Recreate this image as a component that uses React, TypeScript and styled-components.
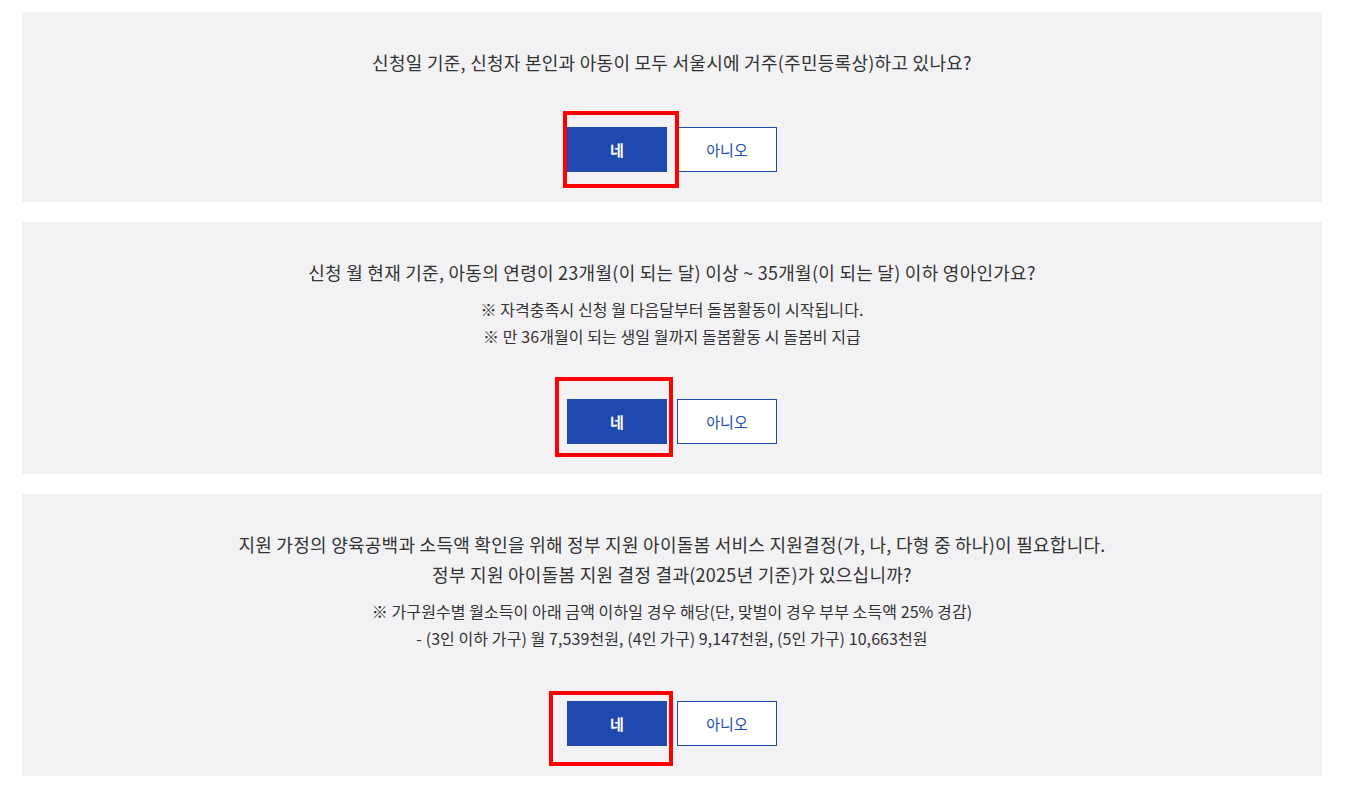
import React from "react";
import styled, { createGlobalStyle } from "styled-components";

const GlobalStyle = createGlobalStyle`
  body {
    margin: 0;
    background: #ffffff;
    font-family: "Noto Sans CJK KR", "Noto Sans", sans-serif;
    color: #333333;
  }
`;

const Page = styled.div`
  display: flex;
  flex-direction: column;
  gap: 20px;
  width: 1300px;
  padding: 12px 0 0 22px;
`;

const Card = styled.section`
  background: #f2f2f4;
  padding: 35px 0 30px;
  display: flex;
  flex-direction: column;
  align-items: center;
  text-align: center;
`;

const Question = styled.p`
  margin: 0;
  font-size: 18px;
  line-height: 30px;
  letter-spacing: 0.27px;
  color: #333333;
`;

const Notes = styled.div`
  margin-top: 9px;
  font-size: 16px;
  line-height: 26.5px;
  letter-spacing: 0.08px;
  color: #333333;
`;

const Buttons = styled.div`
  margin-top: 50px;
  display: flex;
  gap: 10px;
`;

const ButtonWrap = styled.div`
  position: relative;
`;

const Button = styled.button<{ $primary?: boolean }>`
  width: 100px;
  height: 45px;
  box-sizing: border-box;
  border: 1px solid #2049b0;
  background: ${(p) => (p.$primary ? "#2049b0" : "#ffffff")};
  color: ${(p) => (p.$primary ? "#ffffff" : "#2049b0")};
  font-family: "Noto Sans CJK KR", "Noto Sans", sans-serif;
  font-size: 15px;
  font-weight: ${(p) => (p.$primary ? 700 : 400)};
  cursor: pointer;
  padding: 0;
`;

// red annotation frame drawn over the "yes" button
const Highlight = styled.div<{ $t: number; $r: number; $b: number; $l: number }>`
  position: absolute;
  top: ${(p) => p.$t}px;
  right: ${(p) => p.$r}px;
  bottom: ${(p) => p.$b}px;
  left: ${(p) => p.$l}px;
  border: 4px solid #ff0000;
  pointer-events: none;
`;

type Frame = { t: number; r: number; b: number; l: number };

function Choice({ frame }: { frame: Frame }) {
  return (
    <Buttons>
      <ButtonWrap>
        <Button $primary>네</Button>
        <Highlight $t={frame.t} $r={frame.r} $b={frame.b} $l={frame.l} />
      </ButtonWrap>
      <Button>아니오</Button>
    </Buttons>
  );
}

export default function App() {
  return (
    <>
      <GlobalStyle />
      <Page>
        <Card>
          <Question>
            신청일 기준, 신청자 본인과 아동이 모두 서울시에 거주(주민등록상)하고 있나요?
          </Question>
          <Choice frame={{ t: -16, r: -12, b: -16, l: -4 }} />
        </Card>
        <Card>
          <Question>
            신청 월 현재 기준, 아동의 연령이 23개월(이 되는 달) 이상 ~ 35개월(이 되는 달) 이하 영아인가요?
          </Question>
          <Notes>
            ※ 자격충족시 신청 월 다음달부터 돌봄활동이 시작됩니다.
            <br />※ 만 36개월이 되는 생일 월까지 돌봄활동 시 돌봄비 지급
          </Notes>
          <Choice frame={{ t: -22, r: -6, b: -13, l: -12 }} />
        </Card>
        <Card>
          <Question>
            지원 가정의 양육공백과 소득액 확인을 위해 정부 지원 아이돌봄 서비스 지원결정(가, 나, 다형 중 하나)이 필요합니다.
            <br />
            정부 지원 아이돌봄 지원 결정 결과(2025년 기준)가 있으십니까?
          </Question>
          <Notes>
            ※ 가구원수별 월소득이 아래 금액 이하일 경우 해당(단, 맞벌이 경우 부부 소득액 25% 경감)
            <br />- (3인 이하 가구) 월 7,539천원, (4인 가구) 9,147천원, (5인 가구) 10,663천원
          </Notes>
          <Choice frame={{ t: -10, r: -6, b: -20, l: -18 }} />
        </Card>
      </Page>
    </>
  );
}
